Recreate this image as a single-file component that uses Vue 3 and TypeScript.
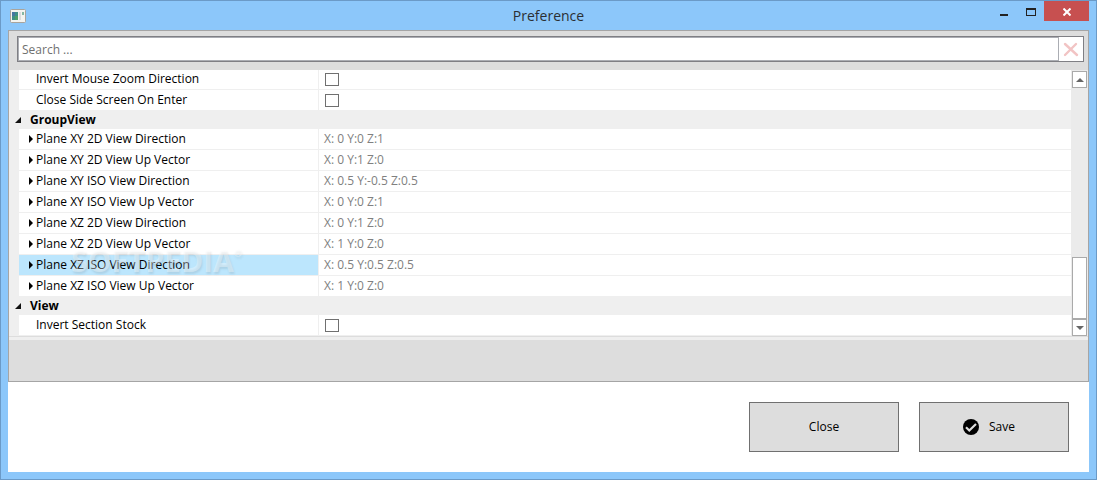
<script setup lang="ts">
import { ref, reactive } from 'vue'

interface Item {
  id: string
  name: string
  value?: string
  selected?: boolean
}
interface Group {
  title: string
  items: Item[]
}

const query = ref('')
const checks = reactive<Record<string, boolean>>({ zoom: false, side: false, stock: false })
const groups: Group[] = [
  {
    title: '',
    items: [
      { id: 'zoom', name: 'Invert Mouse Zoom Direction' },
      { id: 'side', name: 'Close Side Screen On Enter' },
    ],
  },
  {
    title: 'GroupView',
    items: [
      { id: 'xy2d', name: 'Plane XY 2D View Direction', value: 'X: 0 Y:0 Z:1' },
      { id: 'xy2u', name: 'Plane XY 2D View Up Vector', value: 'X: 0 Y:1 Z:0' },
      { id: 'xyid', name: 'Plane XY ISO View Direction', value: 'X: 0.5 Y:-0.5 Z:0.5' },
      { id: 'xyiu', name: 'Plane XY ISO View Up Vector', value: 'X: 0 Y:0 Z:1' },
      { id: 'xz2d', name: 'Plane XZ 2D View Direction', value: 'X: 0 Y:1 Z:0' },
      { id: 'xz2u', name: 'Plane XZ 2D View Up Vector', value: 'X: 1 Y:0 Z:0' },
      { id: 'xzid', name: 'Plane XZ ISO View Direction', value: 'X: 0.5 Y:0.5 Z:0.5', selected: true },
      { id: 'xziu', name: 'Plane XZ ISO View Up Vector', value: 'X: 1 Y:0 Z:0' },
    ],
  },
  { title: 'View', items: [{ id: 'stock', name: 'Invert Section Stock' }] },
]
</script>

<template>
  <div class="window">
    <header class="titlebar">
      <svg class="app-icon" width="16" height="14" viewBox="0 0 16 14" aria-hidden="true">
        <rect x="0.5" y="0.5" width="15" height="13" rx="1" fill="#f4f4f0" stroke="#a9a49c" />
        <rect x="2" y="3" width="6" height="8" fill="#3f8f86" />
        <rect x="2" y="3" width="3" height="4" fill="#4577a0" />
        <rect x="5" y="7" width="3" height="4" fill="#4f9f68" />
        <rect x="9" y="3" width="2" height="8" fill="#dcdcdc" />
        <rect x="12" y="3" width="2" height="3" fill="#86b8a4" />
      </svg>
      <h1>Preference</h1>
      <div class="controls">
        <button type="button" aria-label="Minimize">
          <svg width="8" height="8" viewBox="0 0 8 8"><path d="M0 6H8V8H0z" fill="#222" /></svg>
        </button>
        <button type="button" aria-label="Maximize">
          <svg width="10" height="8" viewBox="0 0 10 8"><path fill-rule="evenodd" d="M0 0H10V8H0zM1 2V7H9V2z" fill="#222" /></svg>
        </button>
        <button type="button" class="exit" aria-label="Close window">
          <svg width="8" height="8" viewBox="0 0 8 8"><path d="M0.500 0.500 7.500 7.500M7.500 0.500 0.500 7.500" stroke="#fff" stroke-width="2" /></svg>
        </button>
      </div>
    </header>

    <main class="client">
      <section class="panel">
        <div class="search">
          <input v-model="query" type="text" placeholder="Search ..." aria-label="Search" />
          <button type="button" aria-label="Clear search" @click="query = ''">
            <svg width="16" height="16" viewBox="0 0 16 16"><path d="M2 3 14 14M13 3 2 14" stroke="#f2c4c4" stroke-width="2.400" stroke-linecap="round" /></svg>
          </button>
        </div>

        <div class="grid">
          <table>
            <colgroup><col class="gutter" /><col class="names" /><col /></colgroup>
            <tbody v-for="group in groups" :key="group.title">
              <tr v-if="group.title" class="group">
                <th colspan="3" scope="colgroup">
                  <button type="button">
                    <svg width="6" height="6" viewBox="0 0 6 6" aria-hidden="true"><path d="M6 0V6H0z" fill="#111" /></svg>
                    {{ group.title }}
                  </button>
                </th>
              </tr>
              <tr v-for="item in group.items" :key="item.id" class="item" :class="{ selected: item.selected }">
                <td class="gutter"></td>
                <th scope="row">
                  <button v-if="item.value" type="button" class="name">
                    <svg width="4" height="8" viewBox="0 0 4 8" aria-hidden="true"><path d="M0 0 4 4 0 8z" /></svg>
                    {{ item.name }}
                  </button>
                  <label v-else class="name plain" :for="item.id">{{ item.name }}</label>
                  <span v-if="item.selected" class="watermark" aria-hidden="true">SOFTPEDIA<sup>®</sup></span>
                </th>
                <td class="value">
                  <template v-if="item.value">{{ item.value }}</template>
                  <input v-else :id="item.id" v-model="checks[item.id]" type="checkbox" />
                </td>
              </tr>
            </tbody>
          </table>
          <div class="scrollbar">
            <button type="button" aria-label="Scroll up">
              <svg width="8" height="4" viewBox="0 0 8 4"><path d="M0 4 4 0 8 4z" fill="#666" /></svg>
            </button>
            <div class="track"></div>
            <div class="thumb"></div>
            <button type="button" aria-label="Scroll down">
              <svg width="8" height="4" viewBox="0 0 8 4"><path d="M0 0H8L4 4z" fill="#666" /></svg>
            </button>
          </div>
        </div>
        <div class="splitter"></div>
        <div class="description"></div>
      </section>

      <footer class="actions">
        <button type="button">Close</button>
        <button type="button" class="save">
          <svg width="16" height="16" viewBox="0 0 16 16" aria-hidden="true">
            <circle cx="8" cy="8" r="8" />
            <path d="M3 8.300 6.300 11.500 13 5" fill="none" stroke="#ddd" stroke-width="2.200" />
          </svg>
          Save
        </button>
      </footer>
    </main>
  </div>
</template>

<style>
body {
  margin: 0;
}
</style>

<style scoped>
* {
  box-sizing: border-box;
}
.window {
  min-height: 100vh;
  display: flex;
  flex-direction: column;
  padding: 0 7px 7px;
  border: 1px solid #6b9ac7;
  background: #8cc7fa;
  font: 12px/16px "Open Sans", "Noto Sans", sans-serif;
  color: #000;
}
button {
  font: inherit;
  color: inherit;
  padding: 0;
  border: 0;
  background: none;
  display: flex;
  align-items: center;
}
svg {
  flex: none;
  display: block;
}
.titlebar {
  height: 29px;
  display: grid;
  grid-template-columns: 1fr auto 1fr;
  align-items: center;
}
.app-icon {
  margin-left: 2px;
}
h1 {
  margin: 0;
  font-size: 14px;
  line-height: 20px;
  font-weight: 400;
  color: #2b2f33;
}
.controls {
  display: flex;
  justify-content: flex-end;
  align-self: start;
}
.controls button {
  width: 27px;
  height: 20px;
  padding-top: 1px;
  justify-content: center;
}
.controls .exit {
  width: 45px;
  padding-right: 0;
  padding-left: 1px;
  background: #c75050;
}
.client {
  flex: 1;
  display: flex;
  flex-direction: column;
  background: #fff;
}
.panel {
  flex: 1;
  display: flex;
  flex-direction: column;
  border: 1px solid #a5a5a5;
  background: #ddd;
}
.search {
  display: flex;
  height: 26px;
  margin: 5px 4px 8px 8px;
  border: 1px solid #7f7f84;
  background: #fff;
}
.search input {
  flex: 1;
  min-width: 0;
  border: 1px solid #abadb3;
  padding: 2px 3px 0;
  font: inherit;
  background: #fff;
  outline: 0;
}
.search input::placeholder {
  color: #707070;
  opacity: 1;
}
.search button {
  width: 24px;
  justify-content: center;
}
.grid {
  display: flex;
  overflow: hidden;
  background: #efefef;
}
table {
  flex: 1;
  table-layout: fixed;
  border-spacing: 0;
  width: 0;
  margin-top: -1px;
}
col.gutter {
  width: 10px;
}
col.names {
  width: 300px;
}
th,
td {
  padding: 0;
  text-align: left;
  font-weight: 400;
}
.group th {
  height: 18px;
}
.group button {
  font-weight: 700;
  gap: 9px;
  padding-left: 6px;
}
.item th,
.item td {
  height: 21px;
  border-bottom: 1px solid #efefef;
  background: #fff;
}
.item th {
  position: relative;
  border-right: 1px solid #efefef;
}
.item .gutter {
  background: #efefef;
}
.item.selected th {
  background: #bce6fd;
}
.name {
  gap: 3px;
  padding-left: 10px;
}
.name.plain {
  padding-left: 17px;
}
.item .value {
  padding-left: 5px;
  color: #808080;
}
.value input {
  appearance: none;
  display: block;
  width: 14px;
  height: 13px;
  margin: 0 1px;
  border: 1px solid #707070;
  background: #fff;
}
.value input:checked {
  background: #707070;
}
.watermark {
  position: absolute;
  left: 52px;
  top: -10px;
  font-weight: 700;
  font-size: 30px;
  line-height: 32px;
  color: rgba(255, 255, 255, 0.35);
  text-shadow: 1px 2px 2px rgba(90, 100, 110, 0.15);
  pointer-events: none;
  white-space: nowrap;
}
.watermark sup {
  font-size: 10px;
  line-height: 16px;
  vertical-align: top;
}
.scrollbar {
  width: 17px;
  display: flex;
  flex-direction: column;
  padding: 1px 1px 0;
  background: #ebebeb;
}
.scrollbar button {
  height: 17px;
  justify-content: center;
  border: 1px solid #aaa;
  background: #fff;
}
.track {
  flex: 14;
}
.thumb {
  flex: 5;
  border: 1px solid #aaa;
  background: #fff;
}
.splitter {
  height: 4px;
  border-top: 1px solid #ddd;
  background: #efefef;
}
.description {
  flex: 1;
  min-height: 40px;
}
.actions {
  display: flex;
  justify-content: flex-end;
  gap: 20px;
  padding: 20px;
}
.actions button {
  width: 150px;
  height: 50px;
  justify-content: center;
  gap: 10px;
  border: 1px solid #707070;
  background: #ddd;
}
.actions .save {
  padding-right: 10px;
}
</style>
